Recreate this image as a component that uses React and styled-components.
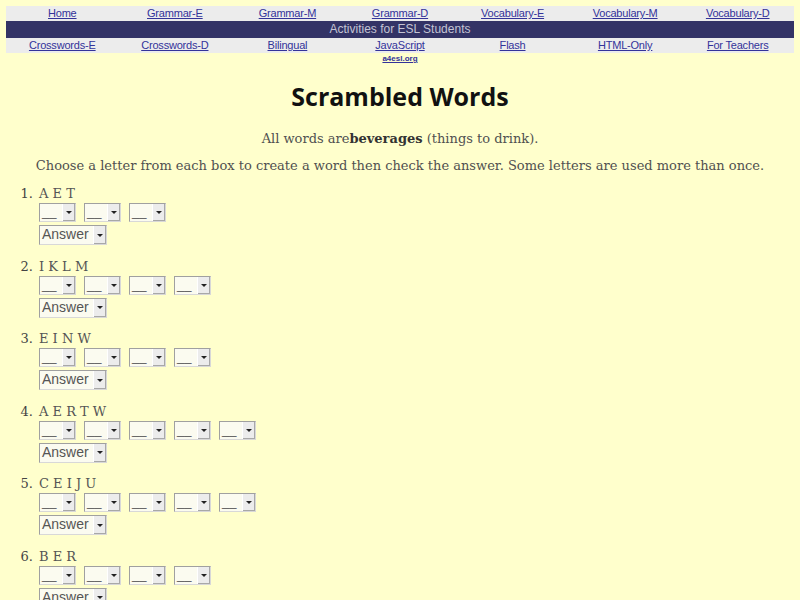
// Packages
import React from "react"
import styled, { createGlobalStyle } from "styled-components"

// Data
const topLinks = ["Home", "Grammar-E", "Grammar-M", "Grammar-D", "Vocabulary-E", "Vocabulary-M", "Vocabulary-D"]
const bottomLinks = ["Crosswords-E", "Crosswords-D", "Bilingual", "JavaScript", "Flash", "HTML-Only", "For Teachers"]

const questions = [
    { letters: "A E T", boxes: 3 },
    { letters: "I K L M", boxes: 4 },
    { letters: "E I N W", boxes: 4 },
    { letters: "A E R T W", boxes: 5 },
    { letters: "C E I J U", boxes: 5 },
    { letters: "B E R", boxes: 4 },
]

// Styles
const GlobalStyle = createGlobalStyle`
    body {
        margin: 0;
        background: #ffffcc;
        font-family: "DejaVu Serif", serif;
    }
`

const Page = styled.div`
    padding: 6px 6px 0 6px;
`

const NavRow = styled.div`
    display: grid;
    grid-template-columns: repeat(7, 1fr);
    background: #ececec;
    height: 15px;
    align-items: center;
`

const NavLink = styled.a`
    justify-self: center;
    font-family: "Liberation Sans", Arial, sans-serif;
    font-size: 11px;
    letter-spacing: -0.2px;
    color: #33339a;
    text-decoration: underline;
    line-height: 15px;
`

const Banner = styled.div`
    background: #333366;
    color: #c4c4d4;
    font-family: "Liberation Sans", Arial, sans-serif;
    font-size: 12px;
    text-align: center;
    height: 17px;
    line-height: 17px;
`

const SubRow = styled.div`
    display: grid;
    grid-template-columns: repeat(7, 1fr);
`

const SmallLink = styled.a`
    grid-column: 4;
    justify-self: center;
    font-family: "Liberation Sans", Arial, sans-serif;
    font-size: 8px;
    font-weight: bold;
    color: #33339a;
    text-decoration: underline;
    line-height: 11px;
`

const Title = styled.h1`
    margin: 15px 0 0 0;
    text-align: center;
    font-family: "Comic Sans MS", "Open Sans", sans-serif;
    font-size: 25px;
    font-weight: bold;
    color: #111;
`

const Intro = styled.p`
    margin: 18px 0 0 0;
    text-align: center;
    font-size: 13px;
    color: #505050;

    b {
        color: #333;
    }
`

const Instructions = styled.p`
    margin: 12px 0 0 0;
    text-align: center;
    font-size: 13px;
    color: #505050;
`

const List = styled.ol`
    margin: 13px 0 0 0;
    padding-left: 31px;
    font-size: 13px;
    color: #555;

    li {
        margin-bottom: 13.5px;
        padding-left: 2px;
    }

    li::marker {
        color: #444;
    }
`

const Letters = styled.div`
    line-height: 16px;
`

const BoxRow = styled.div`
    display: flex;
    gap: 8px;
    margin: 1px 0 0 0;
`

const Select = styled.span`
    display: inline-flex;
    align-items: stretch;
    width: ${(p) => p.$width}px;
    height: ${(p) => p.$height}px;
    box-sizing: border-box;
    border: 1px solid #a0a0a0;
    border-right-color: #d8d8d8;
    border-bottom-color: #d8d8d8;
    background: #fbfbf0;
    font-family: "Liberation Sans", Arial, sans-serif;
    font-size: ${(p) => p.$size}px;
    color: #555;
`

const SelectText = styled.span`
    flex: 1;
    padding-left: 2px;
    line-height: ${(p) => p.$height - 3}px;
    white-space: nowrap;
`

const Arrow = styled.span`
    width: 12px;
    display: flex;
    align-items: center;
    justify-content: center;
    background: #ececec;
    border-left: 1px solid #fff;
    box-shadow: inset -1px -1px 0 #a8a8a8;

    &::after {
        content: "";
        border-left: 3px solid transparent;
        border-right: 3px solid transparent;
        border-top: 3px solid #222;
    }
`

const AnswerRow = styled.div`
    margin: 3px 0 0 0;
`

function Box({ text, width, height, size }) {
    return (
        <Select $width={width} $height={height} $size={size}>
            <SelectText $height={height}>{text}</SelectText>
            <Arrow />
        </Select>
    )
}

function App() {
    return (
        <Page>
            <GlobalStyle />

            <NavRow>
                {topLinks.map((l) => (
                    <NavLink key={l} href="#">
                        {l}
                    </NavLink>
                ))}
            </NavRow>
            <Banner>Activities for ESL Students</Banner>
            <NavRow>
                {bottomLinks.map((l) => (
                    <NavLink key={l} href="#">
                        {l}
                    </NavLink>
                ))}
            </NavRow>
            <SubRow>
                <SmallLink href="#">a4esl.org</SmallLink>
            </SubRow>

            <Title>Scrambled Words</Title>
            <Intro>
                All words are<b>beverages</b> (things to drink).
            </Intro>
            <Instructions>
                Choose a letter from each box to create a word then check the answer. Some letters are used more than once.
            </Instructions>

            <List>
                {questions.map((q, i) => (
                    <li key={i}>
                        <Letters>{q.letters}</Letters>
                        <BoxRow>
                            {Array.from({ length: q.boxes }).map((_, j) => (
                                <Box key={j} text="__" width={37} height={19} size={13} />
                            ))}
                        </BoxRow>
                        <AnswerRow>
                            <Box text="Answer" width={68} height={20} size={14} />
                        </AnswerRow>
                    </li>
                ))}
            </List>
        </Page>
    )
}

export default App
